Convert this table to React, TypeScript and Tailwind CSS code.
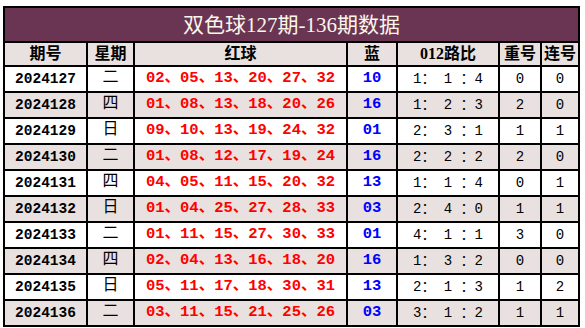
const rows = [
  { qi: '2024127', week: '二', red: ['02', '05', '13', '20', '27', '32'], blue: '10', ratio: ['1', '1', '4'], chong: '0', lian: '0' },
  { qi: '2024128', week: '四', red: ['01', '08', '13', '18', '20', '26'], blue: '16', ratio: ['1', '2', '3'], chong: '2', lian: '0' },
  { qi: '2024129', week: '日', red: ['09', '10', '13', '19', '24', '32'], blue: '01', ratio: ['2', '3', '1'], chong: '1', lian: '1' },
  { qi: '2024130', week: '二', red: ['01', '08', '12', '17', '19', '24'], blue: '16', ratio: ['2', '2', '2'], chong: '2', lian: '0' },
  { qi: '2024131', week: '四', red: ['04', '05', '11', '15', '20', '32'], blue: '13', ratio: ['1', '1', '4'], chong: '0', lian: '1' },
  { qi: '2024132', week: '日', red: ['01', '04', '25', '27', '28', '33'], blue: '03', ratio: ['2', '4', '0'], chong: '1', lian: '1' },
  { qi: '2024133', week: '二', red: ['01', '11', '15', '27', '30', '33'], blue: '01', ratio: ['4', '1', '1'], chong: '3', lian: '0' },
  { qi: '2024134', week: '四', red: ['02', '04', '13', '16', '18', '20'], blue: '16', ratio: ['1', '3', '2'], chong: '0', lian: '0' },
  { qi: '2024135', week: '日', red: ['05', '11', '17', '18', '30', '31'], blue: '13', ratio: ['2', '1', '3'], chong: '1', lian: '2' },
  { qi: '2024136', week: '二', red: ['03', '11', '15', '21', '25', '26'], blue: '03', ratio: ['3', '1', '2'], chong: '1', lian: '1' },
]

const headers = ['期号', '星期', '红球', '蓝', '012路比', '重号', '连号']

const cell = 'flex items-center justify-center leading-none'
const serif = "font-['Liberation_Serif','Noto_Sans_CJK_SC',serif]"
const mono = "font-['Liberation_Mono','Noto_Sans_CJK_SC',monospace]"

export default function App() {
  return (
    <div className="w-[585px] h-[328px] bg-white overflow-hidden">
      <div className="ml-[3px] mt-[6px] w-[577px] bg-black p-[2px] grid grid-cols-[81px_45px_211px_48px_100px_40px_36px] grid-rows-[33px_22px_repeat(10,24px)] gap-[2px]">
        {/* 标题 */}
        <div className={`${cell} ${serif} col-span-7 bg-[#6a3553] text-[#fbf6ea] text-[21px] pt-[1px]`}>
          双色球127期-136期数据
        </div>

        {/* 表头 */}
        {headers.map((h) => (
          <div key={h} className={`${cell} ${serif} bg-[#e9e1df] text-black text-[16px] font-bold`}>
            {h}
          </div>
        ))}

        {/* 数据行 */}
        {rows.map((r, i) => {
          const bg = i % 2 === 1 ? 'bg-[#e9e1df]' : 'bg-white'
          return [
            <div key={r.qi + 'a'} className={`${cell} ${mono} ${bg} text-black text-[14.5px] font-bold`}>
              {r.qi}
            </div>,
            <div key={r.qi + 'b'} className={`${cell} ${mono} ${bg} text-black text-[16px] pb-[2px]`}>
              {r.week}
            </div>,
            <div key={r.qi + 'c'} className={`${cell} ${mono} ${bg} text-[#ff0000] text-[15.5px] font-bold`}>
              {r.red.join('、')}
            </div>,
            <div key={r.qi + 'd'} className={`${cell} ${mono} ${bg} text-[#0000ff] text-[15.5px] font-bold`}>
              {r.blue}
            </div>,
            <div key={r.qi + 'e'} className={`${cell} ${mono} ${bg} text-black text-[14px] whitespace-pre`}>
              {`${r.ratio[0]}： ${r.ratio[1]} ：${r.ratio[2]}`}
            </div>,
            <div key={r.qi + 'f'} className={`${cell} ${mono} ${bg} text-black text-[14px]`}>
              {r.chong}
            </div>,
            <div key={r.qi + 'g'} className={`${cell} ${mono} ${bg} text-black text-[14px]`}>
              {r.lian}
            </div>,
          ]
        })}
      </div>
    </div>
  )
}
